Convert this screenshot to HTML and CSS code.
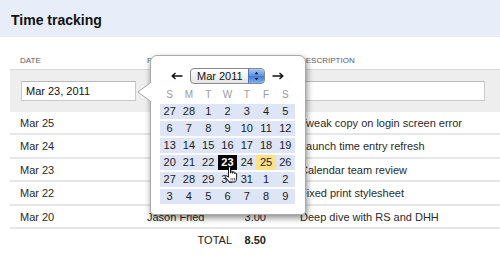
FILE: index.html
```html
<!DOCTYPE html>
<html>
<head>
<meta charset="utf-8">
<link rel="stylesheet" href="styles.css">
</head>
<body>
<div class="header"><h1 class="title">Time tracking</h1></div>
<div class="table">
  <div class="row head">
    <div class="c1">DATE</div>
    <div class="c2">PERSON</div>
    <div class="c3">HOURS</div>
    <div class="c4">DESCRIPTION</div>
  </div>
  <div class="row entry">
    <div class="c1"><div class="input date-input">Mar 23, 2011</div></div>
    <div class="c2"></div>
    <div class="c3"></div>
    <div class="c4"><div class="input desc-input"></div></div>
  </div>
  <div class="row item">
    <div class="c1">Mar 25</div><div class="c2"></div><div class="c3"></div><div class="c4">Tweak copy on login screen error</div>
  </div>
  <div class="row item">
    <div class="c1">Mar 24</div><div class="c2"></div><div class="c3"></div><div class="c4">Launch time entry refresh</div>
  </div>
  <div class="row item">
    <div class="c1">Mar 23</div><div class="c2"></div><div class="c3"></div><div class="c4">Calendar team review</div>
  </div>
  <div class="row item">
    <div class="c1">Mar 22</div><div class="c2"></div><div class="c3"></div><div class="c4">Fixed print stylesheet</div>
  </div>
  <div class="row item">
    <div class="c1">Mar 20</div><div class="c2">Jason Fried</div><div class="c3">3.00</div><div class="c4">Deep dive with RS and DHH</div>
  </div>
  <div class="row total">
    <div class="c1"></div><div class="c2 total-label">TOTAL</div><div class="c3 total-value">8.50</div><div class="c4"></div>
  </div>
</div>

<div class="popup">
  <svg class="callout" width="16" height="20" viewBox="0 0 16 20">
    <polygon points="14,0.5 0.8,10 14,19.5" fill="#fff" stroke="#a9a9a9" stroke-width="1"/>
    <rect x="13" y="1.2" width="3" height="17.6" fill="#fff"/>
  </svg>
  <div class="nav">
    <svg class="arrow" width="12" height="8" viewBox="0 0 12 8"><path d="M11.5 4H1.5M4.5 1L1.2 4L4.5 7" fill="none" stroke="#111" stroke-width="1.4"/></svg>
    <div class="select">
      <span class="select-text">Mar 2011</span>
      <span class="stepper">
        <svg width="16" height="16" viewBox="0 0 16 16"><path d="M8 3.5L10 6H6Z" fill="#1a1a2a"/><path d="M8 12.5L10 10H6Z" fill="#1a1a2a"/></svg>
      </span>
    </div>
    <svg class="arrow" width="12" height="8" viewBox="0 0 12 8"><path d="M0.5 4H10.5M7.5 1L10.8 4L7.5 7" fill="none" stroke="#111" stroke-width="1.4"/></svg>
  </div>
  <div class="weekdays">
    <span>S</span><span>M</span><span>T</span><span>W</span><span>T</span><span>F</span><span>S</span>
  </div>
  <div class="grid">
    <div class="week"><span>27</span><span>28</span><span>1</span><span>2</span><span>3</span><span>4</span><span>5</span></div>
    <div class="week"><span>6</span><span>7</span><span>8</span><span>9</span><span>10</span><span>11</span><span>12</span></div>
    <div class="week"><span>13</span><span>14</span><span>15</span><span>16</span><span>17</span><span>18</span><span>19</span></div>
    <div class="week"><span>20</span><span>21</span><span>22</span><span class="selected">23</span><span>24</span><span class="today">25</span><span>26</span></div>
    <div class="week"><span>27</span><span>28</span><span>29</span><span>30</span><span>31</span><span>1</span><span>2</span></div>
    <div class="week"><span>3</span><span>4</span><span>5</span><span>6</span><span>7</span><span>8</span><span>9</span></div>
  </div>
  <svg class="hand" width="14" height="17" viewBox="0 0 14 17">
    <path d="M4.5 1.6C4.5 0.5 6.5 0.5 6.5 1.6V7H7V5.6C7 4.7 8.7 4.7 8.7 5.6V7.2H9V6.4C9 5.6 10.6 5.6 10.6 6.4V7.6H11C11 6.9 12.6 6.9 12.6 7.8V11.8C12.6 13.8 11.8 15.5 11.2 16H5.4C4.5 14.8 3 13 1.6 11.4C0.8 10.4 1.8 9.2 2.9 10L4.5 11.2Z" fill="#fff" stroke="#000" stroke-width="0.9" stroke-linejoin="round"/>
    <path d="M7 12V14.5M8.8 12V14.5M10.6 12V14.5" stroke="#000" stroke-width="0.6"/>
  </svg>
</div>
</body>
</html>
```
FILE: styles.css
```css
* { box-sizing: border-box; }
html, body { margin: 0; padding: 0; }
body {
  position: relative;
  width: 500px;
  height: 260px;
  overflow: hidden;
  background: #fff;
  font-family: "Liberation Sans", Arial, sans-serif;
  font-size: 11px;
  color: #222;
}
.header {
  height: 37px;
  background: #e8eef9;
  padding: 12px 0 0 11px;
}
.title {
  margin: 0;
  font-size: 14px;
  line-height: 16px;
  font-weight: bold;
  color: #111;
}
.table {
  margin-left: 10px;
  width: 490px;
}
.row {
  display: grid;
  grid-template-columns: 127px 100px 54px 1fr;
}
.row > div { white-space: nowrap; overflow: hidden; }
.c1 { padding-left: 10px; }
.c2 { padding-left: 10px; }
.c3 { text-align: right; padding-right: 25px; }
.c4 { padding-left: 9px; }
.head {
  height: 32px;
  align-items: end;
  padding-bottom: 3px;
  font-size: 8px;
  line-height: 10px;
  color: #5a5a66;
}
.entry {
  height: 43px;
  background: #eeeeee;
  border-top: 1px solid #d9d9d9;
  padding: 11px 0;
}
.entry .c1 { padding-left: 11px; }
.entry .c4 { padding-right: 15px; padding-left: 5px; }
.input {
  height: 20px;
  background: #fff;
  border: 1px solid #c9c9c9;
  border-top-color: #b9b9b9;
  padding-left: 4px;
  line-height: 18px;
  font-size: 11px;
  color: #111;
}
.date-input { width: 115px; }
.item {
  padding-top: 1px;
  line-height: 20.4px;
  border-bottom: 2px solid #e6e6e6;
  color: #2a2a2a;
}
.total {
  padding-top: 1px;
  line-height: 20px;
}
.total-label { text-align: right; padding-right: 5px; }
.total-value { font-weight: bold; }

.popup {
  position: absolute;
  left: 150px;
  top: 55px;
  width: 156px;
  height: 160px;
  background: #fff;
  border: 1px solid #a9a9a9;
  border-radius: 7px 7px 4px 4px;
  box-shadow: 1px 3px 6px rgba(0, 0, 0, 0.45);
  padding: 12px 10px 10px 9px;
}
.callout {
  position: absolute;
  left: -14px;
  top: 26px;
}
.nav {
  height: 16px;
  display: flex;
  align-items: center;
  justify-content: center;
  gap: 7px;
}
.arrow { display: block; }
.select {
  width: 75px;
  height: 16px;
  border: 1px solid #8a8a8a;
  border-radius: 4px;
  background: linear-gradient(#ffffff, #e4e4e4);
  display: flex;
  align-items: center;
  overflow: hidden;
}
.select-text {
  flex: 1;
  padding-left: 6px;
  font-size: 11px;
  line-height: 14px;
  color: #111;
}
.stepper {
  width: 16px;
  height: 14px;
  background: linear-gradient(#a9c8f4, #5d92e3 50%, #3f78dc 51%, #7fb0f0);
  border-left: 1px solid #4d74b8;
  display: flex;
  align-items: center;
  justify-content: center;
}
.stepper svg { display: block; }
.weekdays {
  height: 20px;
  padding-top: 2px;
  display: grid;
  grid-template-columns: repeat(7, 1fr);
  width: 135px;
  font-size: 10px;
  line-height: 18px;
  color: #9a9a9a;
  text-align: center;
}
.grid {
  width: 135px;
  display: flex;
  flex-direction: column;
  gap: 2px;
}
.week {
  height: 15px;
  display: grid;
  grid-template-columns: repeat(7, 1fr);
  background: #dde5f6;
  text-align: center;
  line-height: 15px;
  font-size: 11px;
  color: #1a1a1a;
}
.week span { display: block; }
.selected {
  background: #000;
  color: #fff;
  font-weight: bold;
}
.today {
  background: #fde28b;
}
.hand {
  position: absolute;
  left: 73px;
  top: 110px;
}
```
